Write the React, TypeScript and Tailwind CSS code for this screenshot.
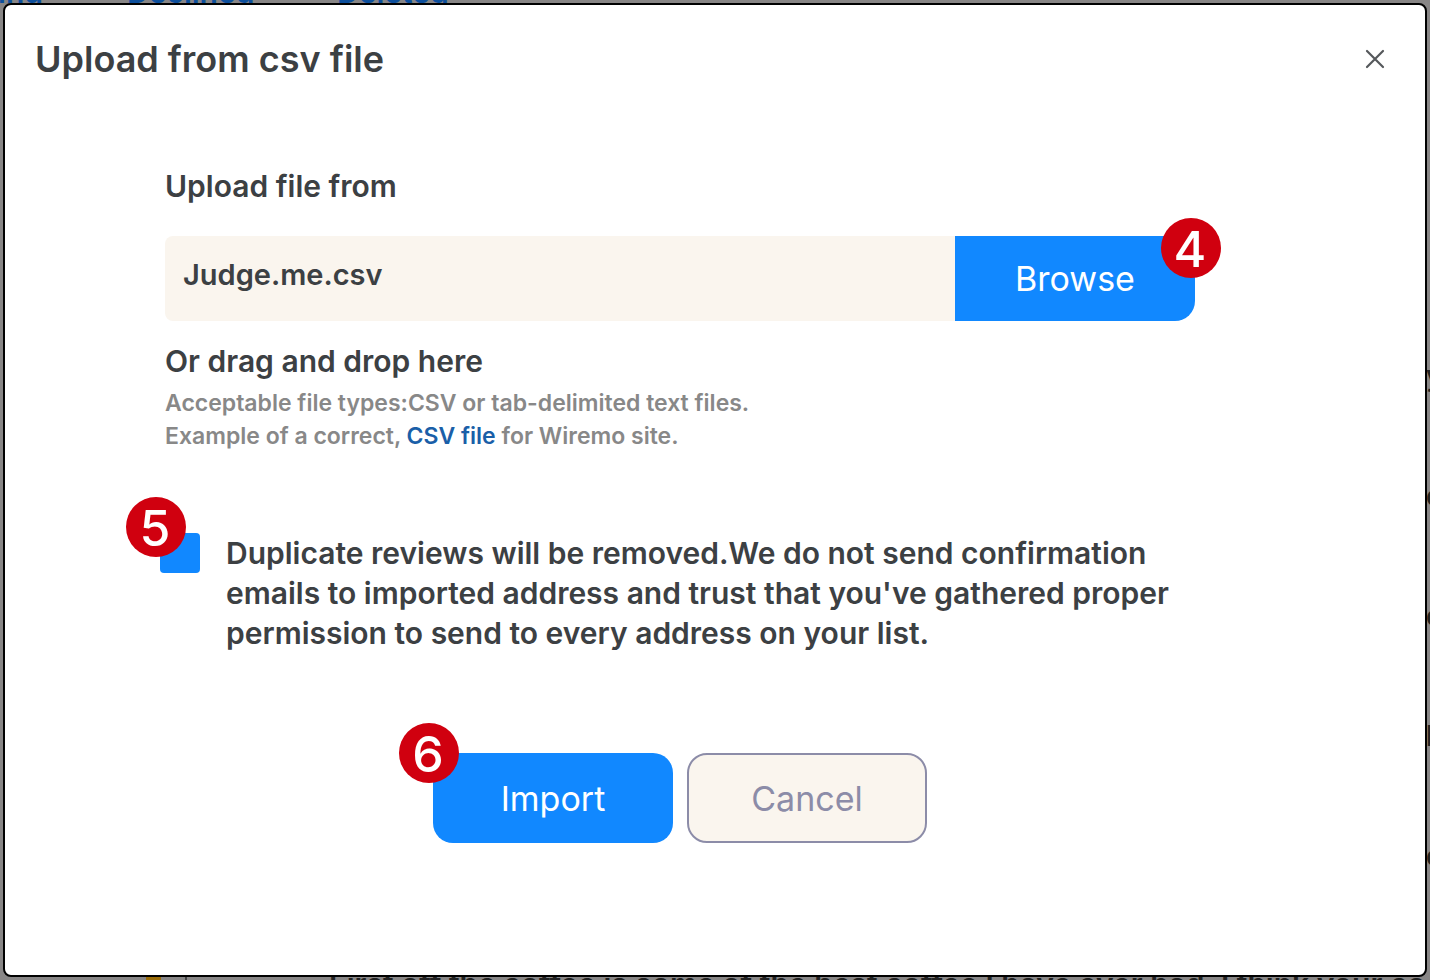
import React from "react";

function StepBadge({ value, className }: { value: number; className: string }) {
  return (
    <span
      className={`pointer-events-none absolute z-10 flex size-[60px] items-center justify-center rounded-full bg-[#d0000f] pt-0.5 pr-0.5 text-[50px] leading-none font-medium text-white ${className}`}
    >
      {value}
    </span>
  );
}

function PageBehind() {
  return (
    <div
      aria-hidden="true"
      className="absolute inset-0 flex flex-col justify-between overflow-hidden bg-[#888686] font-semibold whitespace-nowrap"
    >
      <div className="-mt-6 flex h-8 text-[30px] leading-8 text-[#0d4f9c]">
        <span className="flex w-[127px] justify-end pr-[84px]">Pending</span>
        <span className="w-[210px]">Declined</span>
        <span>Deleted</span>
      </div>
      <div className="mt-[352px] flex w-1 flex-1 flex-col self-end text-[28px] text-[#222]">
        <span className="h-[120px] leading-8">y</span>
        <span className="h-[120px] leading-8">e</span>
        <span className="h-[120px] leading-8">c</span>
        <span className="h-[120px] leading-8">l</span>
        <span className="leading-8">o</span>
      </div>
      <div className="-mb-5 flex h-8 text-[30px] leading-8 text-[#222]">
        <span className="ml-[146px] h-8 w-[15px] bg-[#9a6c08]" />
        <span className="ml-6 h-8 w-36 border-l-2 border-[#444]" />
        <span>First off the coffee is some of the best coffee I have ever had. I think your co</span>
      </div>
    </div>
  );
}

export default function App() {
  return (
    <div className="relative flex min-h-screen p-[3px] font-['Inter',sans-serif] text-[#3c4043]">
      <PageBehind />
      <div
        role="dialog"
        aria-labelledby="dialog-title"
        className="relative flex flex-1 flex-col rounded-lg border-2 border-black bg-white"
      >
        <header className="flex items-center justify-between pt-8 pr-10 pl-[30px]">
          <h1 id="dialog-title" className="text-[36px] leading-[44px] font-semibold">
            Upload from csv file
          </h1>
          <button type="button" aria-label="Close" className="flex size-5 items-center justify-center">
            <svg viewBox="0 0 20 20" className="size-5" fill="none" stroke="#55585b" strokeWidth="2.2" strokeLinecap="round">
              <path d="M2 2 18 18M18 2 2 18" />
            </svg>
          </button>
        </header>

        <form className="mr-[230px] ml-40 flex flex-col pt-[85px]" onSubmit={(e) => e.preventDefault()}>
          <label htmlFor="file-name" className="text-[30px] leading-10 font-semibold">
            Upload file from
          </label>
          <div className="relative mt-[30px] flex h-[85px]">
            <input
              id="file-name"
              type="text"
              readOnly
              value="Judge.me.csv"
              className="min-w-0 flex-1 rounded-l-lg bg-[#faf5ee] pr-5 pb-2 pl-[18px] text-[29px] font-semibold outline-none"
            />
            <button type="button" className="w-60 rounded-r-[20px] bg-[#1188ff] text-[34px] text-white">
              Browse
            </button>
            <StepBadge value={4} className="-top-[18px] -right-[26px]" />
          </div>
          <p className="mt-5 text-[30px] leading-10 font-semibold">Or drag and drop here</p>
          <p className="mt-[6px] text-[23px] leading-[33px] font-semibold text-[#888]">
            Acceptable file types:CSV or tab-delimited text files.
            <br />
            Example of a correct,{" "}
            <a href="#csv-example" className="text-[#1a5fa8]">
              CSV file
            </a>{" "}
            for Wiremo site.
          </p>

          <div className="relative mt-20 -ml-[5px] flex items-start gap-[26px]">
            <input
              id="agree"
              type="checkbox"
              defaultChecked
              className="size-10 shrink-0 appearance-none rounded bg-[#1188ff]"
            />
            <label htmlFor="agree" className="text-[30px] leading-10 font-semibold">
              Duplicate reviews will be removed.We do not send confirmation
              <br />
              emails to imported address and trust that you've gathered proper
              <br />
              permission to send to every address on your list.
            </label>
            <StepBadge value={5} className="-top-9 -left-[34px]" />
          </div>

          <div className="mt-[100px] flex justify-center gap-[14px]">
            <div className="relative flex">
              <button type="submit" className="h-[90px] w-60 rounded-[20px] bg-[#1188ff] text-[34px] text-white">
                Import
              </button>
              <StepBadge value={6} className="-top-[30px] -left-[34px]" />
            </div>
            <button
              type="button"
              className="h-[90px] w-60 rounded-[20px] border-2 border-[#8c8ca8] bg-[#faf5ee] text-[34px] text-[#8c8ca8]"
            >
              Cancel
            </button>
          </div>
        </form>
      </div>
    </div>
  );
}
